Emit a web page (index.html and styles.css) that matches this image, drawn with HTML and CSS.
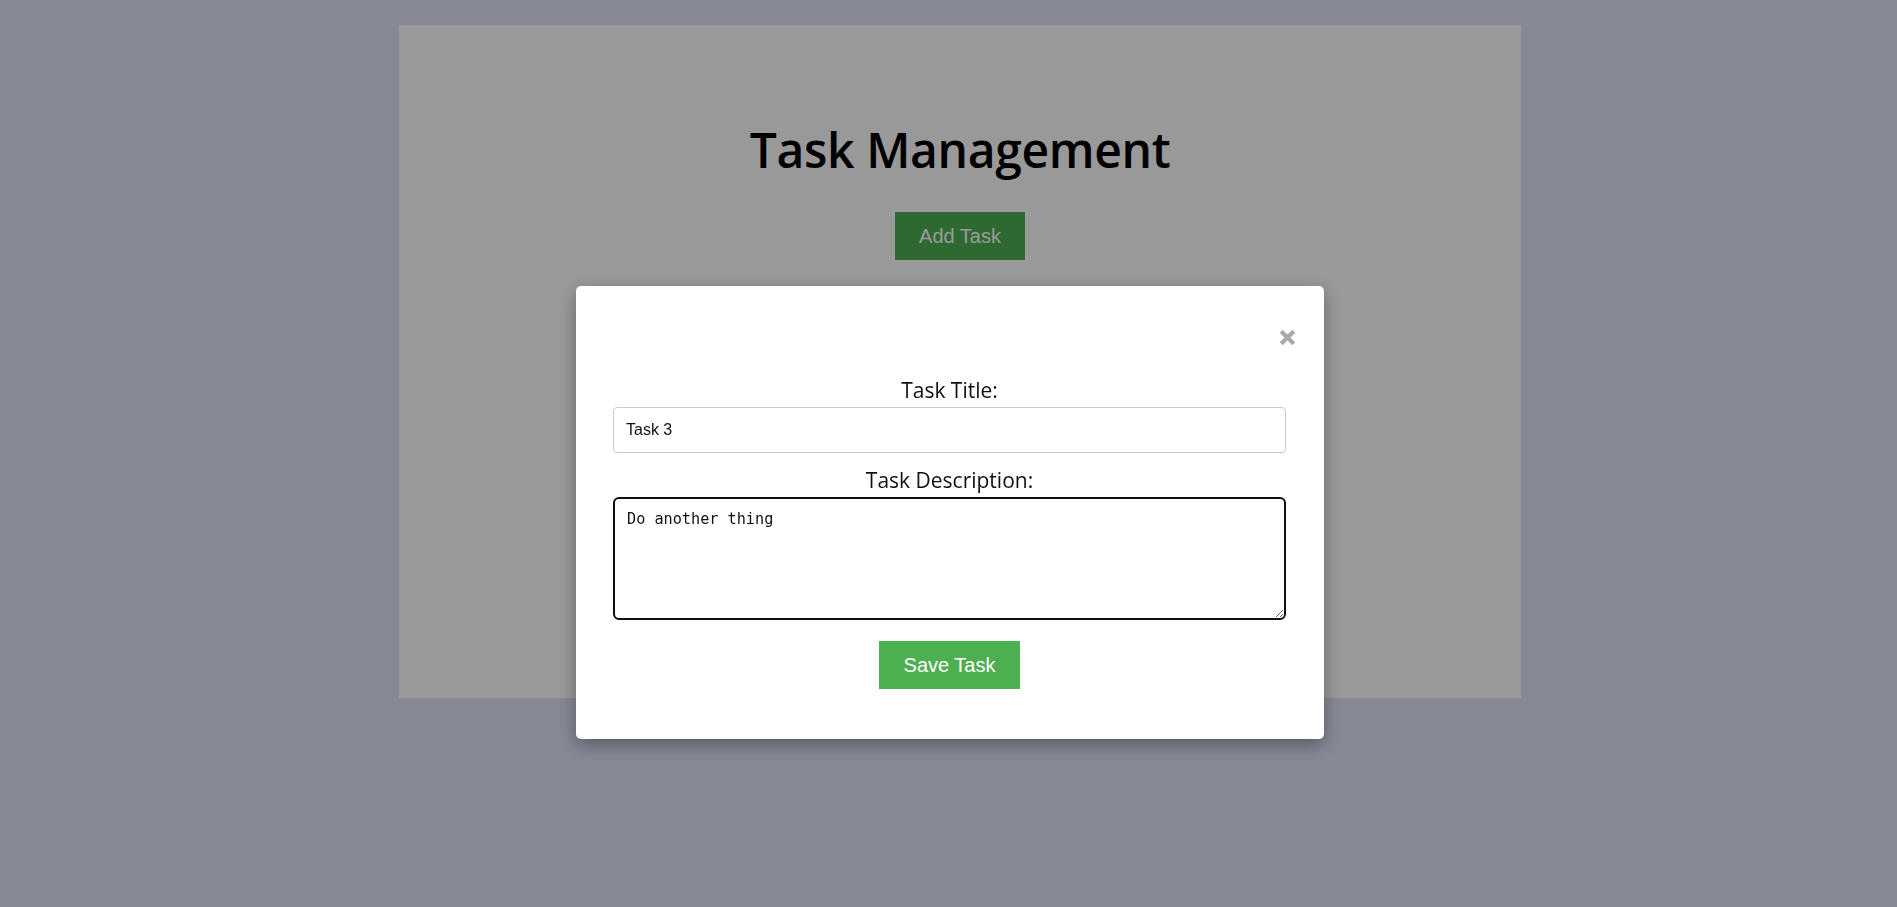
FILE: index.html
```html
<!DOCTYPE html>
<html lang="en">
<head>
<meta charset="utf-8">
<title>Task Management</title>
<link rel="stylesheet" href="styles.css">
</head>
<body>
<main class="container">
  <h1 class="title">Task Management</h1>
  <div class="actions">
    <button class="btn" type="button">Add Task</button>
  </div>
  <ul class="task-list"></ul>
</main>

<div class="overlay">
  <div class="modal">
    <div class="close-row">
      <span class="close" aria-label="Close">
        <svg width="17" height="17" viewBox="0 0 17 17"><path d="M2.2 2.2 L14.8 14.8 M14.8 2.2 L2.2 14.8" stroke="#aaaaaa" stroke-width="4.2" stroke-linecap="butt" fill="none"/></svg>
      </span>
    </div>
    <form class="form">
      <label class="label" for="title">Task Title:</label>
      <input class="input" id="title" type="text" value="Task 3">
      <label class="label" for="desc">Task Description:</label>
      <textarea class="textarea" id="desc">Do another thing</textarea>
      <div class="actions">
        <button class="btn btn-save" type="button">Save Task</button>
      </div>
    </form>
  </div>
</div>
</body>
</html>
```

FILE: styles.css
```css
html, body {
  margin: 0;
  padding: 0;
}

body {
  background: #dfe3fa;
  font-family: "Open Sans", "Liberation Sans", sans-serif;
  height: 907px;
  overflow: hidden;
}

.container {
  box-sizing: border-box;
  width: 1122px;
  height: 673px;
  margin: 25px 0 0 399px;
  padding-top: 96px;
  background: #ffffff;
  text-align: center;
}

.title {
  margin: 0;
  font-family: "Open Sans", sans-serif;
  font-weight: 600;
  font-size: 48px;
  line-height: 58px;
  letter-spacing: -0.35px;
  color: #000;
}

.container .actions {
  margin-top: 33px;
}

.task-list {
  margin: 0;
  padding: 0;
  list-style: none;
}

.actions {
  display: flex;
  justify-content: center;
}

.btn {
  background: #4caf50;
  color: #ffffff;
  border: none;
  font-family: "Liberation Sans", Arial, sans-serif;
  font-size: 20px;
  line-height: 24px;
  padding: 12px 24px;
  cursor: pointer;
}

.btn-save {
  padding: 12px 25px;
}

.overlay {
  position: fixed;
  inset: 0;
  background: rgba(0, 0, 0, 0.4);
  display: flex;
  justify-content: center;
  align-items: flex-start;
}

.modal {
  box-sizing: border-box;
  width: 748px;
  margin-top: 286px;
  margin-left: 3px;
  padding: 43px 38px 50px 37px;
  background: #ffffff;
  border-radius: 5px;
  box-shadow: 0 6px 18px rgba(0, 0, 0, 0.35);
}

.close-row {
  display: flex;
  justify-content: flex-end;
  margin-right: -10px;
  height: 17px;
}

.close {
  display: block;
  width: 17px;
  height: 17px;
  cursor: pointer;
}

.close svg {
  display: block;
}

.form {
  margin-top: 32px;
  display: flex;
  flex-direction: column;
}

.label {
  display: block;
  text-align: center;
  font-family: "Open Sans", sans-serif;
  font-size: 21px;
  line-height: 24px;
  color: #111;
  margin-bottom: 5px;
}

.input {
  box-sizing: border-box;
  width: 100%;
  height: 46px;
  margin: 0 0 15px 0;
  padding: 0 12px;
  border: 1px solid #cccccc;
  border-radius: 4px;
  font-family: "Liberation Sans", Arial, sans-serif;
  font-size: 16px;
  color: #111;
  outline: none;
}

.textarea {
  box-sizing: border-box;
  width: 100%;
  height: 123px;
  margin: 0 0 21px 0;
  padding: 11px 12px;
  border: 2px solid #101010;
  border-radius: 6px;
  font-family: "DejaVu Sans Mono", "Liberation Mono", monospace;
  font-size: 15.2px;
  line-height: 18px;
  color: #111;
  outline: none;
}
```
